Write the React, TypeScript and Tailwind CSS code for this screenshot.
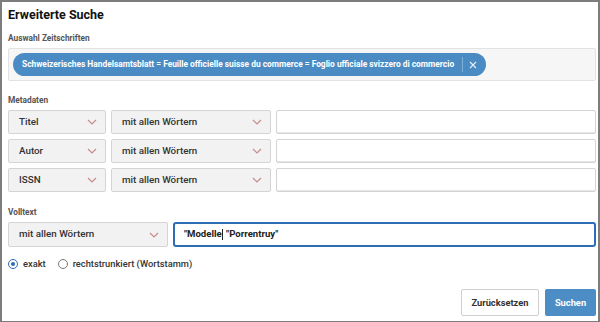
import React from "react";

const Chevron = () => (
  <svg width="10" height="6" viewBox="0 0 10 6" fill="none">
    <path d="M1 1l4 4 4-4" stroke="#c98a8a" strokeWidth="1.2" />
  </svg>
);

const Select = ({ label, w }: { label: string; w: string }) => (
  <div
    className={`${w} h-full flex items-center justify-between pl-[10px] pr-[8px] bg-[#f2f2f2] border border-[#d4d4d4] rounded-[2px] text-[9.8px] font-medium text-[#333]`}
  >
    <span>{label}</span>
    <Chevron />
  </div>
);

export default function App() {
  return (
    <div
      className="w-[600px] h-[322px] border-2 border-b border-[#7d7d7d] bg-white overflow-hidden flex flow-col flex-col"
      style={{ fontFamily: "Roboto, 'Liberation Sans', sans-serif" }}
    >
      <div className="pl-[6px] pr-[2px] flex flex-col">
        <div className="h-[24px] mt-[1px] flex items-center text-[12.5px] font-bold text-[#111]">Erweiterte Suche</div>
        <div className="h-[14px] mt-[4px] flex items-center text-[8.3px] font-bold text-[#555]">Auswahl Zeitschriften</div>
        <div className="h-[33px] mt-[3px] bg-[#f6f6f6] border border-[#e2e2e2] rounded-[2px] flex items-center pl-[4px]">
          <div className="h-[23px] flex items-center bg-[#4b8bc3] rounded-full pl-[9px] pr-[9px] text-white text-[8.4px] font-bold">
            <span>Schweizerisches Handelsamtsblatt = Feuille officielle suisse du commerce = Foglio ufficiale svizzero di commercio</span>
            <div className="w-px h-[15px] bg-[#7fb0da] ml-[8px] mr-[6px]" />
            <svg width="8" height="8" viewBox="0 0 8 8">
              <path d="M1 1l6 6M7 1l-6 6" stroke="#e8f0f8" strokeWidth="1.1" />
            </svg>
          </div>
        </div>
        <div className="h-[14px] mt-[12px] flex items-center text-[8.3px] font-bold text-[#555]">Metadaten</div>
        <div className="flex flex-col gap-[5px] mt-[3px]">
          {["Titel", "Autor", "ISSN"].map((t) => (
            <div key={t} className="h-[24px] flex gap-[5px]">
              <Select label={t} w="w-[98px]" />
              <Select label="mit allen Wörtern" w="w-[160px]" />
              <div className="flex-1 h-full border border-[#d4d4d4] rounded-[2px] bg-white shadow-[inset_0_-1px_0_#e6e6e6]" />
            </div>
          ))}
        </div>
        <div className="h-[14px] mt-[13px] flex items-center text-[8.3px] font-bold text-[#555]">Volltext</div>
        <div className="h-[25px] mt-[3px] flex gap-[5px]">
          <Select label="mit allen Wörtern" w="w-[160px]" />
          <div className="flex-1 h-full border-2 border-[#2e6db6] rounded-[3px] bg-white flex items-center pl-[9px] text-[9.6px] font-bold text-[#222]">
            <span>"Modelle</span>
            <span className="w-px h-[11px] bg-[#222] mx-[0.5px]" />
            <span>&nbsp;"Porrentruy"</span>
          </div>
        </div>
        <div className="h-[16px] mt-[9px] flex items-center text-[9.3px] font-medium text-[#333]">
          <span className="w-[10px] h-[10px] rounded-full border-[1.5px] border-[#2e6db6] flex items-center justify-center">
            <span className="w-[4px] h-[4px] rounded-full bg-[#2e6db6]" />
          </span>
          <span className="ml-[5px]">exakt</span>
          <span className="ml-[12px] w-[10px] h-[10px] rounded-full border border-[#777]" />
          <span className="ml-[5px]">rechtstrunkiert (Wortstamm)</span>
        </div>
        <div className="h-[27px] mt-[17px] flex justify-end gap-[6px]">
          <div className="w-[78px] h-full border border-[#cfcfcf] rounded-[2px] bg-white flex items-center justify-center text-[9.3px] font-bold text-[#333]">
            Zurücksetzen
          </div>
          <div className="w-[51px] h-full rounded-[2px] bg-[#4d8dc6] flex items-center justify-center text-[9.3px] font-bold text-white">
            Suchen
          </div>
        </div>
      </div>
    </div>
  );
}
